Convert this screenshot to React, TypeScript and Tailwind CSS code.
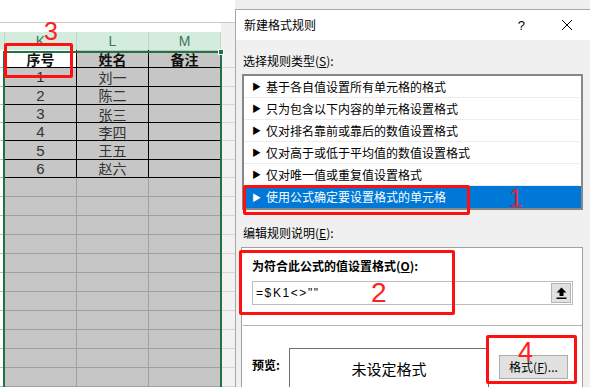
import React from "react";

const rows: [string, string][] = [
  ["1", "刘一"],
  ["2", "陈二"],
  ["3", "张三"],
  ["4", "李四"],
  ["5", "王五"],
  ["6", "赵六"],
];

const items = [
  "基于各自值设置所有单元格的格式",
  "只为包含以下内容的单元格设置格式",
  "仅对排名靠前或靠后的数值设置格式",
  "仅对高于或低于平均值的数值设置格式",
  "仅对唯一值或重复值设置格式",
  "使用公式确定要设置格式的单元格",
];

function Sheet() {
  const empty = Array.from({ length: 11 });
  return (
    <div className="w-[235px] flex flex-col shrink-0 bg-white font-['Noto_Sans_CJK_SC',sans-serif]">
      <div className="h-[24px] border-b border-[#c8c8c8] bg-white" />
      <div className="h-[9px] flex">
        <div className="w-[221px] bg-white" />
        <div className="flex-1 bg-[#f0f0f0]" />
      </div>
      <div className="h-[19px] flex">
        <div className="w-[5px] bg-[#d3ecdd] border-r border-[#bcd9c7]" />
        {["K", "L", "M"].map((c) => (
          <div
            key={c}
            className="w-[72px] bg-[#d3ecdd] border-r border-[#bcd9c7] flex items-center justify-center text-[14px] text-[#3f7656] font-['Liberation_Sans',sans-serif] leading-none"
          >
            {c}
          </div>
        ))}
        <div className="flex-1 bg-[#f0f0f0]" />
      </div>
      {/* header row */}
      <div className="h-[19px] flex text-[14px] leading-none text-[#111]">
        <div className="w-[5px] border-b border-[#bdbdbd]" />
        <div className="w-[72px] bg-white border-r border-b border-black flex items-center justify-center font-bold">
          序号
        </div>
        <div className="w-[72px] bg-[#c6c6c6] border-r border-b border-black flex items-center justify-center font-bold">
          姓名
        </div>
        <div className="w-[72px] bg-[#c6c6c6] border-r border-b border-black flex items-center justify-center font-bold">
          备注
        </div>
        <div className="flex-1 bg-[#f2f2f2] border-b border-[#d6d6d6]" />
      </div>
      {rows.map(([n, name]) => (
        <div key={n} className="h-[19px] flex text-[14px] leading-none text-[#333]">
          <div className="w-[5px] border-b border-[#bdbdbd]" />
          <div className="w-[72px] bg-[#c6c6c6] border-r border-b border-black flex items-center justify-center font-['Liberation_Sans',sans-serif] text-[15px]">
            {n}
          </div>
          <div className="w-[72px] bg-[#c6c6c6] border-r border-b border-black flex items-center justify-center">
            {name}
          </div>
          <div className="w-[72px] bg-[#c6c6c6] border-r border-b border-black" />
          <div className="flex-1 bg-[#f2f2f2] border-b border-[#d6d6d6]" />
        </div>
      ))}
      {empty.map((_, i) => (
        <div key={i} className="h-[19px] flex shrink-0">
          <div className="w-[5px] border-b border-[#bdbdbd]" />
          <div className="w-[72px] bg-[#c6c6c6] border-r border-b border-[#a0a0a0]" />
          <div className="w-[72px] bg-[#c6c6c6] border-r border-b border-[#a0a0a0]" />
          <div className="w-[72px] bg-[#c6c6c6] border-r border-b border-[#a0a0a0]" />
          <div className="flex-1 bg-[#f2f2f2] border-b border-[#d6d6d6]" />
        </div>
      ))}
    </div>
  );
}

function Dialog() {
  return (
    <div className="flex-1 flex flex-col bg-[#efefef] pt-[9px] font-['Noto_Sans_CJK_SC',sans-serif] text-[12px] text-black">
      <div className="flex-1 flex flex-col border-l border-t border-[#a8a8a8] bg-[#f0f0f0]">
        <div className="h-[30px] shrink-0 bg-white flex items-center pl-[8px]">
          <span className="leading-none">新建格式规则</span>
          <span className="ml-auto mr-[36px] text-[13px] font-['Liberation_Sans',sans-serif] leading-none">?</span>
          <svg width="12" height="12" viewBox="0 0 12 12" className="mr-[17px]">
            <path d="M1 1 L11 11 M11 1 L1 11" stroke="#000" strokeWidth="1" />
          </svg>
        </div>
        <div className="flex flex-col pl-[6px] pr-[6px]">
          <div className="h-[16px] mt-[13px] pl-[1px] leading-[16px]">
            选择规则类型(<span className="underline">S</span>):
          </div>
          <div className="mt-[5px] w-[341px] border-2 border-[#878787] bg-white flex flex-col">
            {items.map((t, i) => {
              const sel = i === items.length - 1;
              return (
                <div
                  key={t}
                  className={
                    sel
                      ? "h-[22px] flex items-center pl-[8px] bg-[#0078d7] text-white"
                      : "h-[22px] flex items-center pl-[8px] border-b border-[#ececec] mx-[2px] -ml-0"
                  }
                >
                  <span className="text-[9px] leading-none w-[14px]">▶</span>
                  <span className="leading-none">{t}</span>
                </div>
              );
            })}
          </div>
          <div className="h-[16px] mt-[15px] pl-[1px] leading-[16px]">
            编辑规则说明(<span className="underline">E</span>):
          </div>
          <div className="mt-[6px] -ml-[1px] w-[342px] h-[200px] bg-white border-l border-t border-r border-[#a0a0a0] flex flex-col">
            <div className="h-[16px] mt-[10px] pl-[10px] leading-[16px] font-bold">
              为符合此公式的值设置格式(<span className="underline">O</span>):
            </div>
            <div className="mt-[7px] ml-[10px] w-[321px] h-[24px] border border-[#bdbdbd] flex items-center">
              <span className="pl-[3px] tracking-[1.6px] leading-none font-['Liberation_Sans',sans-serif] text-[12px]">
                =$K1&lt;&gt;""
              </span>
              <div className="ml-auto mr-[1px] w-[20px] h-[20px] bg-[#e1e1e1] border border-[#b4b4b4] flex items-center justify-center">
                <svg width="11" height="12" viewBox="0 0 11 12">
                  <path d="M5.5 0.5 L10.5 5.5 L7.5 5.5 L7.5 9 L3.5 9 L3.5 5.5 L0.5 5.5 Z" fill="#000" />
                  <rect x="0.5" y="10.5" width="10" height="1.5" fill="#000" />
                </svg>
              </div>
            </div>
            <div className="mt-[20px] h-px bg-[#b4b4b4] ml-[1px]" />
            <div className="mt-[22px] flex items-start pl-[10px]">
              <div className="w-[37px] mt-[9px] h-[16px] leading-[16px] font-bold">预览:</div>
              <div className="w-[200px] h-[60px] border-l border-t border-r border-[#6e6e6e] flex justify-center pt-[10px]">
                <span className="text-[15px] leading-[20px]">未设定格式</span>
              </div>
              <div className="ml-[10px] mt-[7px] w-[69px] h-[24px] bg-[#e1e1e1] border border-[#adadad] flex items-center justify-center leading-none">
                格式(<span className="underline">F</span>)...
              </div>
            </div>
          </div>
        </div>
      </div>
    </div>
  );
}

export default function App() {
  return (
    <div className="relative w-[590px] h-[387px] overflow-hidden flex bg-white">
      <Sheet />
      <Dialog />
      {/* selection border */}
      <div className="absolute left-[3px] top-[51px] w-[219px] h-[360px] border-2 border-[#217346]" />
      <div className="absolute left-[218px] top-[49px] w-[6px] h-[6px] bg-[#217346] border border-white" />
      {/* annotations */}
      <div className="absolute left-[4px] top-[43px] w-[69px] h-[35px] border-[3px] border-[#ff1010] rounded-[2px]" />
      <div className="absolute left-[44px] top-[19px] text-[25px] leading-none text-[#ff2020] font-['Liberation_Sans',sans-serif]">
        3
      </div>
      <div className="absolute left-[243px] top-[185px] w-[227px] h-[30px] border-[3px] border-[#ff1010] rounded-[2px]" />
      <div className="absolute left-[509px] top-[186px] text-[25px] leading-none text-[#e8202c] font-['Liberation_Sans',sans-serif]">
        1
      </div>
      <div className="absolute left-[239px] top-[250px] w-[216px] h-[65px] border-[3px] border-[#ff1010] rounded-[2px]" />
      <div className="absolute left-[371px] top-[279px] text-[28px] leading-none text-[#ff2020] font-['Liberation_Sans',sans-serif]">
        2
      </div>
      <div className="absolute left-[486px] top-[335px] w-[91px] h-[49px] border-[3px] border-[#ff1010] rounded-[2px]" />
      <div className="absolute left-[518px] top-[339px] text-[27px] leading-none text-[#ff2020] font-['Liberation_Sans',sans-serif]">
        4
      </div>
    </div>
  );
}
